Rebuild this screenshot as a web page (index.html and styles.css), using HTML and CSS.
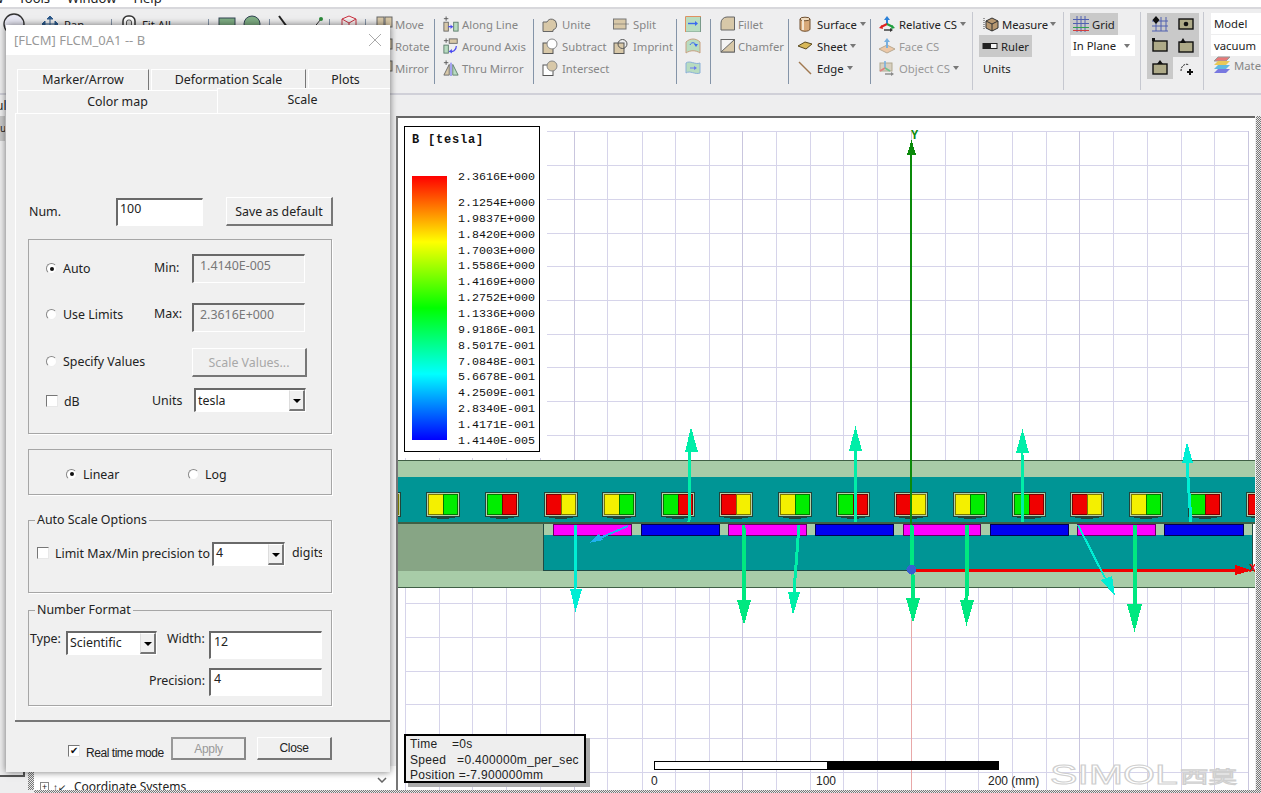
FILE: index.html
```html
<!DOCTYPE html>
<html lang="en">
<head>
<meta charset="utf-8">
<title>FLCM_0A1 -- B</title>
<link rel="stylesheet" href="styles.css">
</head>
<body>
<svg class="defs" width="0" height="0" aria-hidden="true">
  <symbol id="i-zoom" viewBox="0 0 22 22"><circle cx="11" cy="11" r="10" fill="#e8e8f4" stroke="#333" stroke-width="1.4"/></symbol>
  <symbol id="i-pan" viewBox="0 0 18 18"><path d="M9 1v16M1 9h16M9 1 6 4h6zM9 17l-3-3h6zM1 9l3-3v6zM17 9l-3-3v6z" fill="#2c5a8c" stroke="#2c5a8c"/></symbol>
  <symbol id="i-fit" viewBox="0 0 18 18"><rect x="3" y="1" width="12" height="16" rx="5" fill="#fff" stroke="#333" stroke-width="1.5"/><rect x="6.5" y="5" width="5" height="8" rx="2" fill="#ddd" stroke="#555"/></symbol>
  <symbol id="i-rect" viewBox="0 0 18 18"><rect x="1" y="3" width="16" height="13" fill="#7fae84" stroke="#345"/></symbol>
  <symbol id="i-circle" viewBox="0 0 18 18"><circle cx="9" cy="9" r="8" fill="#7fae84" stroke="#345"/></symbol>
  <symbol id="i-line" viewBox="0 0 18 18"><path d="M3 1 14 16" stroke="#222" stroke-width="2"/></symbol>
  <symbol id="i-pt" viewBox="0 0 18 18"><path d="M4 15 13 4" stroke="#333"/><circle cx="13" cy="4" r="2" fill="#2a8a3a"/></symbol>
  <symbol id="i-cube" viewBox="0 0 18 18"><path d="M9 1 16 4v9l-7 4-7-4V4zM2 4l7 4 7-4M9 8v9" fill="#fbeeee" stroke="#c83040"/></symbol>
  <symbol id="i-move" viewBox="0 0 18 18"><rect x="1" y="2" width="7" height="10" fill="#d8c8a8" stroke="#666"/><rect x="9" y="2" width="7" height="10" fill="#d8c8a8" stroke="#666"/></symbol>
  <symbol id="i-along" viewBox="0 0 18 18"><path d="M1 3h5M3.5.5v5" stroke="#555" fill="none"/><rect x="1" y="7" width="5" height="10" fill="#d8c8a8" stroke="#666"/><rect x="12" y="7" width="5" height="10" fill="#b8dcc0" stroke="#5a7a6a"/><path d="M6 12h5" stroke="#4a4af0" stroke-width="1.4"/><path d="M11 12 8.5 9.5v5z" fill="#4a4af0"/></symbol>
  <symbol id="i-around" viewBox="0 0 18 18"><path d="M1 3h5M3.5.5v5" stroke="#555" fill="none"/><rect x="7" y="1" width="9" height="5" fill="#d8c8a8" stroke="#666"/><rect x="1" y="8" width="5" height="9" fill="#b8dcc0" stroke="#5a7a6a"/><path d="M15 9c0 5-4 7-8 6" stroke="#4a4af0" stroke-width="1.4" fill="none"/><path d="M7 15l3-2.5v5z" fill="#4a4af0"/></symbol>
  <symbol id="i-mirror" viewBox="0 0 18 18"><path d="M1 3h5M3.5.5v5" stroke="#555" fill="none"/><path d="M1 17 7 5v12z" fill="#d8c8a8" stroke="#666"/><path d="M17 17 11 5v12z" fill="#b8dcc0" stroke="#5a7a6a"/><path d="M9 3v15" stroke="#4a4af0"/></symbol>
  <symbol id="i-unite" viewBox="0 0 16 16"><path d="M1 6h4a5 5 0 0 1 9.500 2A5 5 0 0 1 11 14v1.500H1z" fill="#d8c8a8" stroke="#666"/></symbol>
  <symbol id="i-subtract" viewBox="0 0 16 16"><rect x="1" y="5" width="10" height="10.500" fill="#d8c8a8" stroke="#555"/><circle cx="10" cy="6" r="5" fill="#fff" stroke="#888"/></symbol>
  <symbol id="i-intersect" viewBox="0 0 16 16"><rect x="1" y="5" width="10" height="10.500" fill="#fff" stroke="#555"/><circle cx="10" cy="6" r="5" fill="#d8c8a8" stroke="#888"/><path d="M11 1h4v4h-4z" fill="none"/></symbol>
  <symbol id="i-split" viewBox="0 0 16 16"><rect x=".5" y="3" width="12.500" height="10" fill="#d8c8a8" stroke="#777"/><path d="M.5 8h15" stroke="#555" stroke-dasharray="1 1"/></symbol>
  <symbol id="i-imprint" viewBox="0 0 16 16"><rect x="1" y="5" width="10" height="10.500" fill="#d8c8a8" stroke="#555"/><circle cx="9.500" cy="6" r="4.500" fill="none" stroke="#555"/></symbol>
  <symbol id="i-plane1" viewBox="0 0 16 16"><rect width="16" height="16" fill="#b8dcc0"/><path d="M.5 16V.5M1 .5h15" stroke="#e09060" fill="none"/><path d="M15.500 1v15H1" stroke="#7a9a8a" fill="none"/><path d="M3 7.500h8" stroke="#3a6af0" stroke-width="1.400"/><path d="M13 7.500 10 5v5z" fill="#3a6af0"/></symbol>
  <symbol id="i-plane2" viewBox="0 0 16 16"><path d="M1 15V4c4-4 10-4 14 0v11c-4-3-10-3-14 0z" fill="#b8dcc0" stroke="#c8a080"/><path d="M5 7c1-3 5-3 6 0" stroke="#3a6af0" fill="none"/><path d="M11 9 9 6h4z" fill="#3a6af0"/></symbol>
  <symbol id="i-plane3" viewBox="0 0 16 16"><path d="M1 3c4-3 9 2 14 0v10c-5 2-10-3-14 0z" fill="#b8dcc0" stroke="#8ab0d8"/><path d="M5 8h6" stroke="#6a7af0"/><path d="M12 8 9 6v4z" fill="#6a7af0"/></symbol>
  <symbol id="i-fillet" viewBox="0 0 16 16"><path d="M1 14V7a6 6 0 0 1 6-6h7.500v13z" fill="#d8c8a8" stroke="#666"/></symbol>
  <symbol id="i-chamfer" viewBox="0 0 16 16"><rect x="1" y="1.500" width="13.500" height="12.500" fill="#f4f4f4" stroke="#666"/><path d="M1 14 14.500 1.500V14z" fill="#d8c8a8" stroke="#666"/></symbol>
  <symbol id="i-surface" viewBox="0 0 16 16"><path d="M3 3v10c0 3 10 3 10 0V3z" fill="#d8a878" stroke="#705030"/><ellipse cx="8" cy="3" rx="5" ry="1.800" fill="#f0dcc0" stroke="#705030"/><path d="M6 4v10" stroke="#f4e4d0" stroke-width="2"/></symbol>
  <symbol id="i-sheet" viewBox="0 0 16 16"><path d="M1 8 8 4l7 2-6 5z" fill="#d8b858" stroke="#5a4a20"/></symbol>
  <symbol id="i-edge" viewBox="0 0 16 16"><path d="M2 2 14 14" stroke="#a07850" stroke-width="1.400"/></symbol>
  <symbol id="i-rcs" viewBox="0 0 16 16"><path d="M8 8V2" stroke="#2a80d8" stroke-width="2"/><path d="M8 0 5 4h6z" fill="#2a80d8"/><path d="M8 8 2 11" stroke="#e02020" stroke-width="2"/><path d="M0 12l4 1-1-4z" fill="#e02020"/><path d="M8 8l6 3" stroke="#20a040" stroke-width="2"/><path d="M16 12l-4 1 1-4z" fill="#20a040"/><path d="M5 14h7" stroke="#333" stroke-width="1.400"/><path d="M14 14l-3-2v4z" fill="#333"/></symbol>
  <symbol id="i-fcs" viewBox="0 0 16 16"><path d="M0 11 8 7l8 4-8 4z" fill="#ecc8a8" stroke="#b8a890"/><path d="M8 10V2" stroke="#78b0e0" stroke-width="2"/><path d="M8 0 5 4h6z" fill="#78b0e0"/></symbol>
  <symbol id="i-ocs" viewBox="0 0 16 16"><rect x="1" y="3" width="12" height="8" fill="#d8d0c0" stroke="#b0a890"/><path d="M6 8V1" stroke="#78b0e0" stroke-width="1.600"/><path d="M6 8 1 11" stroke="#e08080" stroke-width="1.600"/><path d="M6 8l5 3" stroke="#70c090" stroke-width="1.600"/><path d="M6 14h7" stroke="#888" stroke-width="1.400"/><path d="M15 14l-3-2v4z" fill="#888"/></symbol>
  <symbol id="i-measure" viewBox="0 0 16 16"><path d="M1 2v12" stroke="#444" stroke-dasharray="1 1"/><path d="M3 5l6-3 6 3v7l-6 3-6-3z" fill="#b89870" stroke="#333"/><path d="M3 5l6 3 6-3M9 8v7" fill="none" stroke="#333"/></symbol>
  <symbol id="i-ruler" viewBox="0 0 16 16"><rect x="1" y="5.500" width="14" height="5" fill="#f4f4f4" stroke="#222"/><rect x="1" y="5.500" width="8" height="5" fill="#222"/></symbol>
  <symbol id="i-grid" viewBox="0 0 16 16"><path d="M4 0v16M8 0v16M12 0v16M0 3.500h16M0 7.500h16" stroke="#5060b0" fill="none"/><path d="M0 11.500h16" stroke="#30a050"/><path d="M0 14.500h16" stroke="#d04040"/></symbol>
  <symbol id="s-grid" viewBox="0 0 16 16"><path d="M4 1v14M9 1v14M14 1v14M0 5h16M0 10h16M0 15h16" stroke="#5060b0" fill="none"/><path d="M4 0 7.500 4 4 8 .5 4z" fill="#111"/></symbol>
  <symbol id="s-dot" viewBox="0 0 16 16"><rect x="1" y="3" width="14" height="10" fill="#aeaa88" stroke="#111" stroke-width="1.400"/><circle cx="8" cy="8" r="2.300" fill="#111"/></symbol>
  <symbol id="s-corner" viewBox="0 0 16 16"><rect x="1" y="3" width="14" height="10" fill="#aeaa88" stroke="#111" stroke-width="1.400"/><rect width="3" height="3" fill="#111"/></symbol>
  <symbol id="s-top" viewBox="0 0 16 16"><rect x="1" y="4" width="14" height="10" fill="#aeaa88" stroke="#111" stroke-width="1.400"/><path d="M2 5 5 0l3 5z" fill="#111"/></symbol>
  <symbol id="s-mid" viewBox="0 0 16 16"><rect x="1" y="4" width="14" height="10" fill="#aeaa88" stroke="#111" stroke-width="1.400"/><path d="M5 4 8 0l3 4z" fill="#111"/></symbol>
  <symbol id="s-arc" viewBox="0 0 16 16"><path d="M3 11C3 5 8 3 11 5" stroke="#222" fill="none" stroke-dasharray="2 1"/><path d="M9 12h6M12 9v6" stroke="#111" stroke-width="2"/></symbol>
  <symbol id="i-mat" viewBox="0 0 18 18"><path d="M1 5 5 1h12l-4 4z" fill="#e87878" stroke="#999"/><path d="M1 9l4-4h12l-4 4z" fill="#e8c858"/><path d="M1 13l4-4h12l-4 4z" fill="#60b8e0"/><path d="M1 17l4-4h12l-4 4z" fill="#7878e0"/></symbol>

  <symbol id="coil-yg" viewBox="0 0 34 28"><rect class="cf" x="5.500" y="24.500" width="23" height="1"/><rect class="cf" x="11.500" y="25.500" width="11" height="1"/><rect class="cf" x=".5" y=".5" width="33" height="24"/><rect class="cy" x="2.500" y="2.500" width="15" height="20"/><rect class="cg" x="17.500" y="2.500" width="14" height="20"/></symbol>
  <symbol id="coil-gr" viewBox="0 0 34 28"><rect class="cf" x="5.500" y="24.500" width="23" height="1"/><rect class="cf" x="11.500" y="25.500" width="11" height="1"/><rect class="cf" x=".5" y=".5" width="33" height="24"/><rect class="cg" x="2.500" y="2.500" width="15" height="20"/><rect class="cr" x="17.500" y="2.500" width="14" height="20"/></symbol>
  <symbol id="coil-ry" viewBox="0 0 34 28"><rect class="cf" x="5.500" y="24.500" width="23" height="1"/><rect class="cf" x="11.500" y="25.500" width="11" height="1"/><rect class="cf" x=".5" y=".5" width="33" height="24"/><rect class="cr" x="2.500" y="2.500" width="15" height="20"/><rect class="cy" x="17.500" y="2.500" width="14" height="20"/></symbol>
</svg>

<header class="menubar">
  <span class="menu-first">View</span><span>Tools</span><span>Window</span><span>Help</span>
</header>

<nav class="ribbon">
  <div class="grp g-view">
    <div class="item"><svg class="ic22"><use href="#i-zoom"/></svg></div>
    <div class="item pan"><svg class="ic"><use href="#i-pan"/></svg>Pan</div>
  </div><i class="sep"></i>
  <div class="grp g-fit"><div class="item"><svg class="ic"><use href="#i-fit"/></svg>Fit All</div></div><i class="sep"></i>
  <div class="grp g-draw"><div class="item gap8"><svg class="ic"><use href="#i-rect"/></svg><svg class="ic"><use href="#i-circle"/></svg></div></div><i class="sep"></i>
  <div class="grp g-draw2"><div class="item gap20"><svg class="ic"><use href="#i-line"/></svg><svg class="ic"><use href="#i-pt"/></svg></div></div><i class="sep"></i>
  <div class="grp g-cube"><div class="item"><svg class="ic"><use href="#i-cube"/></svg></div></div><i class="sep"></i>
  <div class="grp g-move off">
    <div class="item"><svg class="ic"><use href="#i-move"/></svg>Move</div>
    <div class="item"><svg class="ic"><use href="#i-move"/></svg>Rotate</div>
    <div class="item"><svg class="ic"><use href="#i-move"/></svg>Mirror</div>
  </div><i class="sep"></i>
  <div class="grp g-along off">
    <div class="item"><svg class="ic"><use href="#i-along"/></svg>Along Line</div>
    <div class="item"><svg class="ic"><use href="#i-around"/></svg>Around Axis</div>
    <div class="item"><svg class="ic"><use href="#i-mirror"/></svg>Thru Mirror</div>
  </div><i class="sep"></i>
  <div class="grp g-bool off">
    <div class="col col-bool">
      <div class="item"><svg class="ic16"><use href="#i-unite"/></svg>Unite</div>
      <div class="item"><svg class="ic16"><use href="#i-subtract"/></svg>Subtract</div>
      <div class="item"><svg class="ic16"><use href="#i-intersect"/></svg>Intersect</div>
    </div>
    <div class="col">
      <div class="item"><svg class="ic16"><use href="#i-split"/></svg>Split</div>
      <div class="item"><svg class="ic16"><use href="#i-imprint"/></svg>Imprint</div>
    </div>
  </div><i class="sep"></i>
  <div class="grp g-plane">
    <div class="item"><svg class="ic16"><use href="#i-plane1"/></svg></div>
    <div class="item"><svg class="ic16"><use href="#i-plane2"/></svg></div>
    <div class="item"><svg class="ic16"><use href="#i-plane3"/></svg></div>
  </div><i class="sep"></i>
  <div class="grp g-fillet off">
    <div class="item"><svg class="ic16"><use href="#i-fillet"/></svg>Fillet</div>
    <div class="item"><svg class="ic16"><use href="#i-chamfer"/></svg>Chamfer</div>
  </div><i class="sep"></i>
  <div class="grp g-surf">
    <div class="item"><svg class="ic16"><use href="#i-surface"/></svg>Surface<b class="caret"></b></div>
    <div class="item"><svg class="ic16"><use href="#i-sheet"/></svg>Sheet<b class="caret"></b></div>
    <div class="item"><svg class="ic16"><use href="#i-edge"/></svg>Edge<b class="caret"></b></div>
  </div><i class="sep"></i>
  <div class="grp g-cs">
    <div class="item"><svg class="ic16"><use href="#i-rcs"/></svg>Relative CS<b class="caret"></b></div>
    <div class="item dim"><svg class="ic16"><use href="#i-fcs"/></svg>Face CS</div>
    <div class="item dim"><svg class="ic16"><use href="#i-ocs"/></svg>Object CS<b class="caret"></b></div>
  </div><i class="sep sep-light"></i>
  <div class="grp g-meas">
    <div class="item"><svg class="ic16"><use href="#i-measure"/></svg>Measure<b class="caret"></b></div>
    <div class="item on ruler"><svg class="ic16"><use href="#i-ruler"/></svg>Ruler</div>
    <div class="item">Units</div>
  </div><i class="sep sep-light"></i>
  <div class="grp g-grid">
    <div class="item on gridbtn"><svg class="ic16"><use href="#i-grid"/></svg>Grid</div>
    <div class="plane-select">In Plane<b class="caret"></b></div>
  </div><i class="sep sep-light"></i>
  <div class="grp g-snap">
    <div class="snap on"><svg class="ic16"><use href="#s-grid"/></svg></div>
    <div class="snap on"><svg class="ic16"><use href="#s-dot"/></svg></div>
    <div class="snap on"><svg class="ic16"><use href="#s-corner"/></svg></div>
    <div class="snap on"><svg class="ic16"><use href="#s-top"/></svg></div>
    <div class="snap on"><svg class="ic16"><use href="#s-mid"/></svg></div>
    <div class="snap"><svg class="ic16"><use href="#s-arc"/></svg></div>
  </div><i class="sep sep-light"></i>
  <div class="grp g-model">
    <div class="model-field">Model</div>
    <div class="model-field">vacuum</div>
    <div class="item off"><svg class="ic"><use href="#i-mat"/></svg>Materials</div>
  </div>
</nav>

<main class="workspace">
  <aside class="leftpane">
    <div class="left-top">ul</div>
    <div class="left-tab">u</div>
    <div class="left-grow"></div>
    <div class="left-bottom">
      <div class="left-corner"></div>
      <div class="left-split"></div>
      <div class="left-tree"><span class="tree-plus">+</span><span class="tree-ic">↑↙</span><span>Coordinate Systems</span>
        <svg class="tree-chev" width="10" height="6" viewBox="0 0 10 6"><path d="M1 1 5 5 9 1"/></svg>
      </div>
    </div>
  </aside>
  <section class="viewport">
    <svg class="scene" width="857" height="672" viewBox="398 118 857 672">
      <path class="grid" d="M405 131V790M439 131V790M472 131V790M506 131V790M540 131V790M607 131V790M642 131V790M675 131V790M709 131V790M776 131V790M810 131V790M843 131V790M877 131V790M945 131V790M978 131V790M1012 131V790M1046 131V790M1113 131V790M1147 131V790M1181 131V790M1214 131V790"/>
      <path class="grid" d="M405 131H1248M405 165H1248M405 199H1248M405 233H1248M405 266H1248M405 300H1248M405 334H1248M405 367H1248M405 401H1248M405 435H1248M405 469H1248M405 503H1248M405 536H1248M405 570H1248M405 603H1248M405 637H1248M405 671H1248M405 704H1248M405 738H1248M405 772H1248"/>
      <path class="grid-major" d="M574 131V790M742 131V790M911 131V790M1079 131V790M1248 131V790"/>
      <rect class="blank" x="397" y="118" width="150" height="340"/>
      <path class="ypink" d="M911.500 620V790"/>

      <rect class="band" x="397" y="460.500" width="859" height="17"/>
      <rect class="teal" x="397" y="477" width="859" height="45"/>
      <rect class="band" x="397" y="570.500" width="859" height="16.500"/>
      <rect class="stator" x="397" y="523" width="146" height="48"/>
      <rect class="teal-b" x="543.500" y="523.500" width="709" height="47"/>
      <rect class="mgap" x="544" y="524" width="708" height="11"/>
      <rect class="mag-m" x="553" y="524" width="78" height="11"/><rect class="mag-b" x="641" y="524" width="78" height="11"/>
      <rect class="mag-m" x="728" y="524" width="78" height="11"/><rect class="mag-b" x="815" y="524" width="78" height="11"/>
      <rect class="mag-m" x="903" y="524" width="77" height="11"/><rect class="mag-b" x="990" y="524" width="78" height="11"/>
      <rect class="mag-m" x="1077" y="524" width="78" height="11"/><rect class="mag-b" x="1164" y="524" width="79" height="11"/>
      <rect class="stator-line" x="397" y="521.500" width="859" height="2"/>

      <use href="#coil-ry" x="367" y="492" width="34" height="28"/>
      <use href="#coil-yg" x="426" y="492" width="34" height="28"/>
      <use href="#coil-gr" x="485" y="492" width="34" height="28"/>
      <use href="#coil-ry" x="544" y="492" width="34" height="28"/>
      <use href="#coil-yg" x="602" y="492" width="34" height="28"/>
      <use href="#coil-gr" x="661" y="492" width="34" height="28"/>
      <use href="#coil-ry" x="719" y="492" width="34" height="28"/>
      <use href="#coil-yg" x="778" y="492" width="34" height="28"/>
      <use href="#coil-gr" x="836" y="492" width="34" height="28"/>
      <use href="#coil-ry" x="894" y="492" width="34" height="28"/>
      <use href="#coil-yg" x="953" y="492" width="34" height="28"/>
      <use href="#coil-gr" x="1012" y="492" width="34" height="28"/>
      <use href="#coil-ry" x="1070" y="492" width="34" height="28"/>
      <use href="#coil-yg" x="1129" y="492" width="34" height="28"/>
      <use href="#coil-gr" x="1188" y="492" width="34" height="28"/>
      <use href="#coil-ry" x="1246" y="492" width="34" height="28"/>

      <path class="xaxis" d="M912 570.500H1240"/>
      <path class="xhead" d="M1235 565 1252 570.500 1235 575z"/>
      <text class="xlabel" x="1249" y="572">X</text>
      <path class="yaxis" d="M911 154V570"/>
      <path class="yhead" d="M911.500 140 907 155H916z"/>
      <text class="ylabel" x="911" y="139">Y</text>

      <g class="ar-t">
        <path class="shaft" d="M689 522 690 452"/><path d="M691 427 698 452H685z"/>
        <path class="shaft" d="M855 522V451"/><path d="M855.500 426 862 451H849z"/>
        <path class="shaft" d="M1023 522 1022 453"/><path d="M1022.500 429 1029 453H1016z"/>
        <path class="shaft" d="M799 525 794 592"/><path d="M793 615 788 592H800z"/>
      </g>
      <g class="ar-c">
        <path class="shaft" d="M1191 522 1187 463"/><path d="M1187 442 1193 463H1182z"/>
        <path class="shaft thin" d="M1078 525 1105 578"/><path d="M1115 596 1101 580 1112 576z"/>
        <path class="shaft" d="M576 525 575 590"/><path d="M575.500 612 570 589H582z"/>
      </g>
      <g class="ar-g">
        <path class="shaft wide" d="M743.500 525 744 600"/><path d="M744 625 737 600H751z"/>
        <path class="shaft wide" d="M911.500 525 913 598"/><path d="M913 623 906 598H920z"/>
        <path class="shaft wide" d="M967 525 966.500 600"/><path d="M966.500 626 960 600H974z"/>
        <path class="shaft wide" d="M1135 525V604"/><path d="M1134.500 632 1127 604H1142z"/>
      </g>
      <g class="ar-b">
        <path class="shaft thin" d="M628 526 600 538"/><path d="M589 543 599 534 603 540z"/>
      </g>
      <circle class="origin" cx="911.500" cy="569.500" r="5"/>

      <text class="wm" x="1050" y="784" textLength="128" lengthAdjust="spacingAndGlyphs">SIMOL</text>
      <text class="wm wm-cn" x="1180" y="783" textLength="57" lengthAdjust="spacingAndGlyphs">西莫</text>
    </svg>

    <div class="legend">
      <div class="legend-title">B [tesla]</div>
      <div class="legend-body">
        <div class="colorbar"></div>
        <ul class="legend-values">
          <li class="first">2.3616E+000</li><li>2.1254E+000</li><li>1.9837E+000</li><li>1.8420E+000</li><li>1.7003E+000</li><li>1.5586E+000</li><li>1.4169E+000</li><li>1.2752E+000</li><li>1.1336E+000</li><li>9.9186E-001</li><li>8.5017E-001</li><li>7.0848E-001</li><li>5.6678E-001</li><li>4.2509E-001</li><li>2.8340E-001</li><li>1.4171E-001</li><li>1.4140E-005</li>
        </ul>
      </div>
    </div>

    <div class="status">
      <div>Time    =0s</div>
      <div>Speed   =0.400000m_per_sec</div>
      <div>Position =-7.900000mm</div>
    </div>

    <div class="scalebar">
      <div class="scale-track"><span class="scale-white"></span><span class="scale-black"></span></div>
      <div class="scale-labels"><span>0</span><span>100</span><span>200 (mm)</span></div>
    </div>
  </section>
  <div class="vsplit"></div>
</main>
<div class="hsplit"></div>

<section class="dialog">
  <div class="titlebar"><span>[FLCM] FLCM_0A1 -- B</span>
    <svg class="close-x" width="14" height="14" viewBox="0 0 14 14"><path d="M1 1 13 13M13 1 1 13"/></svg>
  </div>
  <div class="tabs-back">
    <div class="tab t-marker">Marker/Arrow</div><div class="tab t-deform">Deformation Scale</div><div class="tab t-plots">Plots</div>
  </div>
  <div class="tabs-front">
    <div class="tab t-color">Color map</div><div class="tab t-scale">Scale</div>
  </div>
  <div class="pane">
    <div class="num-row">
      <label class="num-label">Num.</label>
      <div class="sunken num-input">100</div>
      <button class="btn save-btn">Save as default</button>
    </div>

    <div class="group g1">
      <div class="g1-row">
        <div class="opt"><i class="radio checked"></i>Auto</div><span class="lbl-min">Min:</span><div class="sunken dis vbox">1.4140E-005</div>
      </div>
      <div class="g1-row">
        <div class="opt opt-up"><i class="radio"></i>Use Limits</div><span class="lbl-max">Max:</span><div class="sunken dis vbox">2.3616E+000</div>
      </div>
      <div class="g1-row r3">
        <div class="opt opt-up1"><i class="radio"></i>Specify Values</div><span></span><button class="btn dis-btn" disabled>Scale Values...</button>
      </div>
      <div class="g1-row r4">
        <div class="opt opt-down"><i class="check"></i>dB</div><span class="units">Units</span><div class="sunken combo units-combo"><span>tesla</span><b class="drop"></b></div>
      </div>
    </div>

    <div class="group g2">
      <div class="opt"><i class="radio checked"></i>Linear</div>
      <div class="opt"><i class="radio"></i>Log</div>
    </div>

    <div class="group g3">
      <span class="group-legend">Auto Scale Options</span>
      <div class="opt"><i class="check"></i>Limit Max/Min precision to</div>
      <div class="sunken combo prec-combo"><span>4</span><b class="drop"></b></div>
      <span class="digits">digits</span>
    </div>

    <div class="group g4">
      <span class="group-legend">Number Format</span>
      <div class="g4-grid">
        <span class="lbl-type">Type:</span>
        <div class="sunken combo type-combo"><span>Scientific</span><b class="drop"></b></div>
        <span class="lbl-width">Width:</span>
        <div class="sunken num-box">12</div>
        <span class="lbl-prec">Precision:</span>
        <div class="sunken num-box">4</div>
      </div>
    </div>
  </div>
  <footer class="dlg-foot">
    <i class="check ticked">✔</i><span class="rt">Real time mode</span>
    <button class="btn foot-btn apply" disabled>Apply</button>
    <button class="btn foot-btn">Close</button>
  </footer>
</section>
</body>
</html>
```
FILE: styles.css
```css
* { box-sizing: border-box; }
html, body { margin: 0; padding: 0; }
body {
  position: relative;
  width: 1261px;
  height: 793px;
  overflow: hidden;
  background: #eeeeef;
  font-family: "Noto Sans", "Open Sans", sans-serif;
  font-size: 12px;
  color: #222;
  display: flex;
  flex-direction: column;
}
.defs { position: absolute; }

/* menu */
.menubar {
  flex: 0 0 7px;
  background: #fff;
  overflow: hidden;
  display: flex;
  font-size: 13px;
  line-height: 14px;
  margin-top: 0;
}
.menubar span { position: relative; top: -9px; margin-right: 17px; }
.menubar .menu-first { margin-left: -25px; margin-right: 15px; }

/* ribbon */
.ribbon {
  flex: 0 0 88px;
  display: flex;
  align-items: flex-start;
  border-top: 2px solid #d8d8dc;
  border-bottom: 2px solid #d0d0d8;
  overflow: hidden;
  font-size: 11.300px;
}
.grp { padding: 4px 0 0 8px; flex: none; height: 80px; }
.sep { flex: none; width: 1px; height: 65px; margin-top: 10px; background: #8494a8; }
.sep-light { height: 78px; margin-top: 3px; background: #c6c8d0; }
.item { height: 22px; display: flex; align-items: center; gap: 4px; white-space: nowrap; }
.ic { width: 18px; height: 18px; flex: none; }
.ic16 { width: 16px; height: 16px; flex: none; }
.ic22 { width: 22px; height: 22px; flex: none; }
.off { color: #868686; }
.dim { color: #9a9a9a; }
.on { background: #c9c9c9; }
.caret { display: inline-block; width: 0; height: 0; margin-left: -1px; border: 3px solid transparent; border-top: 4px solid #777; border-bottom: 0; }

.g-view { width: 111px; padding-left: 3px; display: flex; gap: 16px; }
.pan { gap: 5px; }
.g-fit { width: 96px; }
.g-draw { width: 60px; padding-left: 9px; }
.gap8 { gap: 7px; }
.g-draw2 { width: 59px; padding-left: 6px; }
.gap20 { gap: 14px; }
.g-cube { width: 35px; padding-left: 10px; }
.g-move { width: 68px; padding-left: 10px; }
.g-move .item { gap: 1px; }
.g-along { width: 98px; }
.g-along .item { gap: 3px; }
.g-along .ic { width: 16px; height: 16px; }
.g-bool { width: 142px; display: flex; }
.col-bool { width: 71px; }
.g-plane { width: 33px; }
.g-fillet { width: 77px; padding-left: 9px; }
.g-fillet .item { gap: 2px; }
.g-surf { width: 81px; padding-left: 8px; }
.g-cs { width: 101px; }
.g-meas { width: 90px; padding-left: 6px; }
.g-meas .item:first-child, .g-meas .item:last-child { padding-left: 4px; }
.g-meas .item { gap: 3px; }
.ruler { width: 53px; padding-left: 3px; }
.g-grid { width: 76px; padding-left: 6px; }
.gridbtn { width: 48px; padding-left: 3px; gap: 3px; }
.plane-select { width: 64px; height: 21px; margin-left: 1px; background: #fff; display: flex; align-items: center; justify-content: space-between; padding: 0 5px 0 2px; }
.g-snap { width: 62px; padding-left: 6px; display: grid; grid-template-columns: 26px 26px; grid-auto-rows: 22px; align-content: start; }
.snap { display: flex; align-items: center; justify-content: center; }
.g-model { width: 60px; padding-left: 7px; overflow: hidden; }
.model-field { width: 80px; height: 21px; background: #fff; margin-bottom: 1px; padding-left: 3px; line-height: 21px; }
.g-model .item { padding-left: 2px; margin-top: -3px; gap: 3px; }

/* workspace */
.workspace { flex: 1 1 auto; display: flex; min-height: 0; padding-top: 21px; position: relative; }
.leftpane { flex: 0 0 396px; display: flex; flex-direction: column; position: relative; margin-top: -21px; }
.left-top { height: 21px; line-height: 21px; padding-left: 0; margin-left: -4px; }
.left-tab { width: 5px; height: 25px; background: #c8c8c8; font-size: 10px; line-height: 25px; overflow: hidden; }
.left-grow { flex: 1 1 auto; }
.left-bottom { display: flex; height: 24px; }
.left-corner { width: 25px; height: 11px; border-right: 2px solid #555; border-bottom: 2px solid #555; flex: none; }
.left-split { width: 6px; margin-left: 3px; flex: none; background: repeating-conic-gradient(#777 0 25%, #e8e8e8 0 50%) 0 0 / 2px 2px; }
.left-tree { flex: 1 1 auto; background: #fff; display: flex; align-items: flex-start; gap: 8px; padding: 14px 9px 0 6px; font-size: 12px; white-space: nowrap; overflow: hidden; line-height: 14px; }
.tree-plus { width: 9px; height: 9px; margin-top: 2px; flex: none; border: 1px solid #888; font-size: 9px; line-height: 7px; text-align: center; }
.tree-ic { font-size: 10px; margin-left: -4px; }
.tree-chev { margin: -3px 0 0 auto; flex: none; }
.tree-chev path { fill: none; stroke: #666; stroke-width: 1.500; }

.viewport {
  flex: 0 0 859px;
  position: relative;
  background: #fff;
  border-top: 2px solid #666;
  border-left: 2px solid #777;
  overflow: hidden;
}
.scene { display: block; shape-rendering: crispEdges; }
.vsplit { flex: 1 1 auto; margin-left: 1px; background: repeating-conic-gradient(#777 0 25%, #e8e8e8 0 50%) 0 0 / 2px 2px; }
.hsplit { flex: 0 0 3px; margin-left: 34px; background: repeating-conic-gradient(#777 0 25%, #e8e8e8 0 50%) 0 0 / 2px 2px; }

/* scene */
.grid { stroke: #d6d4ea; stroke-width: 1; fill: none; transform: translate(.5px, .5px); }
.grid-major { stroke: #c9c6de; stroke-width: 1; fill: none; transform: translate(.5px, 0); }
.blank { fill: #fff; }
.ypink { stroke: #e8a8a8; fill: none; }
.band { fill: #a8cca8; stroke: #3f5f45; stroke-width: 1; }
.teal { fill: #009595; }
.teal-b { fill: #009595; stroke: #204a44; stroke-width: 1.5; }
.stator { fill: #87a585; }
.stator-line { fill: #3f5f45; }
.mgap { fill: #a8cca8; }
.mag-m { fill: #ff00ff; stroke: #600060; stroke-width: 1; }
.mag-b { fill: #0000f0; stroke: #000050; stroke-width: 1; }
.cf { fill: #b8d0a8; stroke: #21443a; stroke-width: 1; }
.cy { fill: #f4f000; stroke: #7a7800; stroke-width: 1; }
.cg { fill: #00ee00; stroke: #007800; stroke-width: 1; }
.cr { fill: #f00000; stroke: #780000; stroke-width: 1; }
.xaxis { stroke: #f00000; stroke-width: 3; fill: none; }
.xhead { fill: #f00000; }
.xlabel { fill: #f00000; font-size: 11px; font-weight: 700; font-family: "Liberation Sans", sans-serif; }
.yaxis { stroke: #0a8a0a; stroke-width: 2; fill: none; }
.yhead { fill: #0a8a0a; }
.ylabel { fill: #0a8a0a; font-size: 12px; font-weight: 700; font-family: "Liberation Mono", monospace; }
.shaft { fill: none; stroke-width: 3; }
.shaft.thin { stroke-width: 2; }
.shaft.wide { stroke-width: 4; }
.ar-t { fill: #00eea8; }
.ar-t .shaft { stroke: #00eea8; }
.ar-c { fill: #00eed4; }
.ar-c .shaft { stroke: #00eed4; }
.ar-g { fill: #00e880; }
.ar-g .shaft { stroke: #00e880; }
.ar-b { fill: #20b0f0; }
.ar-b .shaft { stroke: #20b0f0; }
.origin { fill: #3a60d0; }
.wm { fill: #fff; stroke: #cfcfcf; stroke-width: 1; font-size: 28px; font-family: "Liberation Sans", sans-serif; shape-rendering: auto; }
.wm-cn { font-size: 17px; font-family: "Noto Sans CJK SC", sans-serif; }

/* legend */
.legend {
  position: absolute;
  left: 6px;
  top: 8px;
  width: 136px;
  height: 326px;
  background: #fff;
  border: 1.500px solid #000;
  font-family: "Liberation Mono", monospace;
  padding: 6px 0 0 7px;
  color: #111;
}
.legend-title { font-size: 12px; font-weight: 700; letter-spacing: .8px; line-height: 15px; height: 43px; }
.legend-body { display: flex; }
.colorbar { width: 35px; height: 264px; margin-top: 0; flex: none; background: linear-gradient(#ff0000 0, #ffff00 25%, #00ff00 50%, #00ffff 75%, #0000ff 100%); }
.legend-values { list-style: none; margin: -7px 0 0 11px; padding: 0; font-size: 11.670px; }
.legend-values li { height: 15.870px; line-height: 16px; }
.legend-values .first { height: 26px; }

/* status */
.status {
  position: absolute;
  left: 6px;
  top: 616px;
  width: 182px;
  height: 49px;
  background: #eee;
  border: 2px solid #000;
  box-shadow: 4px 4px 0 #aaa;
  padding: 1px 0 0 4px;
  font: 12px/15.500px "Liberation Sans", sans-serif;
  letter-spacing: .3px;
}
.status div { white-space: pre; }

/* scale */
.scalebar { position: absolute; left: 256px; top: 643px; width: 345px; font: 12px/14px "Liberation Sans", sans-serif; }
.scale-track { display: flex; height: 9px; border: 1px solid #000; }
.scale-white { flex: 0 0 172px; background: #fff; }
.scale-black { flex: 1 1 auto; background: #000; }
.scale-labels { display: flex; margin-top: 4px; margin-left: -3px; white-space: nowrap; }
.scale-labels span { flex: none; }
.scale-labels span:nth-child(1) { width: 165px; }
.scale-labels span:nth-child(2) { width: 172px; }

/* dialog */
.dialog {
  position: absolute;
  left: 6px;
  top: 25px;
  width: 384px;
  height: 747px;
  background: #f0f0f0;
  box-shadow: 0 0 7px rgba(0,0,0,.55);
  font-size: 12.400px;
  color: #222;
}
.titlebar { height: 30px; background: #fff; color: #999; display: flex; align-items: center; justify-content: space-between; padding: 0 8px 0 8px; font-size: 13px; }
.close-x path { stroke: #aaa; fill: none; stroke-width: 1; }
.tabs-back { display: flex; margin: 14px 0 0 11px; gap: 2px; height: 21px; }
.tabs-front { display: flex; margin-left: 11px; height: 23px; position: relative; }
.tab { text-align: center; line-height: 20px; border-top: 1px solid #fff; border-left: 1px solid #fff; border-right: 1px solid #777; white-space: nowrap; overflow: hidden; }
.t-marker { width: 132px; }
.t-deform { width: 155px; }
.t-plots { width: 82px; border-right: 0; padding-right: 8px; }
.t-color { width: 200px; border-right: 0; line-height: 22px; }
.t-scale { width: 173px; border-right: 0; margin-top: -2px; height: 25px; line-height: 21px; background: #f0f0f0; padding-right: 3px; }
.pane { margin-left: 9px; height: 607px; border-top: 1px solid #fff; border-left: 1px solid #fff; padding: 83px 0 0 12px; position: relative; }
.t-scale { position: relative; z-index: 1; }

.num-row { display: flex; align-items: center; height: 29px; }
.num-label { width: 88px; padding-left: 1px; }
.sunken { border-style: solid; border-width: 2px 1px 1px 2px; border-color: #696969 #fff #fff #696969; background: #fff; }
.num-input { width: 87px; height: 28px; padding: 1px 0 0 2px; line-height: 16px; }
.btn { font: inherit; color: inherit; background: #f0f0f0; padding: 0; border-style: solid; border-width: 1px 2px 2px 1px; border-color: #fff #777 #777 #fff; }
.save-btn { width: 107px; height: 29px; margin-left: 23px; }

.group { border: 1px solid #a6a6a6; outline: 0; position: relative; width: 304px; box-shadow: 1px 1px 0 #fff; }
.group-legend { position: absolute; left: 6px; top: -10px; padding: 0 2px; background: #f0f0f0; line-height: 18px; }
.opt { display: flex; align-items: center; gap: 6px; white-space: nowrap; }
.opt-up { position: relative; top: -3px; }
.opt-up1 { position: relative; top: -1px; }
.opt-down { position: relative; top: 1px; }
.radio { width: 11px; height: 11px; flex: none; border-radius: 50%; background: #fff; border: 1px solid; border-color: #888 #eee #eee #888; display: flex; align-items: center; justify-content: center; }
.radio.checked::after { content: ""; width: 4px; height: 4px; border-radius: 50%; background: #111; }
.check { width: 12px; height: 12px; flex: none; background: #fff; border: 1px solid; border-color: #777 #e8e8e8 #e8e8e8 #777; font-style: normal; }

.g1 { margin-top: 13px; height: 195px; padding: 14px 0 0 17px; }
.g1-row { display: grid; grid-template-columns: 108px 38px 113px; height: 29px; align-items: center; margin-bottom: 20px; }
.lbl-min { position: relative; top: -1px; }
.lbl-max { position: relative; top: -4px; }
.vbox { height: 29px; color: #777; padding: 2px 0 0 6px; line-height: 16px; background: #f0f0f0; }
.r3 { margin-top: -4px; margin-bottom: 11px; }
.dis-btn { height: 29px; width: 115px; color: #a8a8a8; }
.r4 { height: 24px; }
.units { margin-left: -2px; }
.combo { display: flex; align-items: stretch; justify-content: space-between; background: #fff; padding-left: 2px; line-height: 19px; }
.drop { width: 16px; flex: none; position: relative; background: #f0f0f0; border-style: solid; border-width: 1px 2px 2px 1px; border-color: #fff #777 #777 #ddd; }
.drop::after { content: ""; position: absolute; left: 3px; top: 8px; border: 4px solid transparent; border-top: 4px solid #000; border-bottom: 0; }
.units-combo { width: 112px; height: 24px; margin-left: 2px; line-height: 21px; }

.g2 { margin-top: 15px; height: 46px; display: flex; align-items: center; padding: 4px 0 0 37px; gap: 0; }
.g2 .opt:first-child { width: 122px; }

.g3 { margin-top: 25px; height: 73px; display: flex; align-items: flex-start; padding: 21px 0 0 8px; }
.g3 .opt { height: 22px; width: 175px; margin-right: 0; }
.prec-combo { width: 73px; height: 24px; flex: none; line-height: 17px; }
.digits { margin-left: 7px; width: 30px; overflow: hidden; line-height: 22px; flex: none; }

.g4 { margin-top: 17px; height: 96px; padding: 20px 0 0 1px; }
.g4-grid { display: grid; grid-template-columns: 36px 91px 52px 113px; grid-template-rows: 29px 28px; row-gap: 8px; }
.lbl-type { line-height: 15px; }
.type-combo { height: 24px; }
.lbl-width { padding-left: 10px; line-height: 15px; }
.num-box { height: 28px; padding-left: 3px; line-height: 17px; }
.lbl-prec { grid-column: 1 / 4; text-align: right; padding-right: 4px; line-height: 26px; }

.dlg-foot { position: relative; margin-left: 9px; height: 52px; border-top: 2px solid #777; display: flex; align-items: flex-start; padding: 15px 0 0 53px; font: 12px/16px "Liberation Sans", sans-serif; }
.ticked { margin-top: 8px; font-size: 10px; line-height: 10px; color: #111; text-align: center; }
.rt { width: 74px; margin: 8px 11px 0 6px; white-space: nowrap; letter-spacing: -.45px; }
.foot-btn { width: 75px; height: 23px; margin-right: 11px; background: #f0f0f0; letter-spacing: -.3px; }
.apply { color: #999; border: 2px solid #888; border-top-color: #999; border-left-color: #999; }
```
